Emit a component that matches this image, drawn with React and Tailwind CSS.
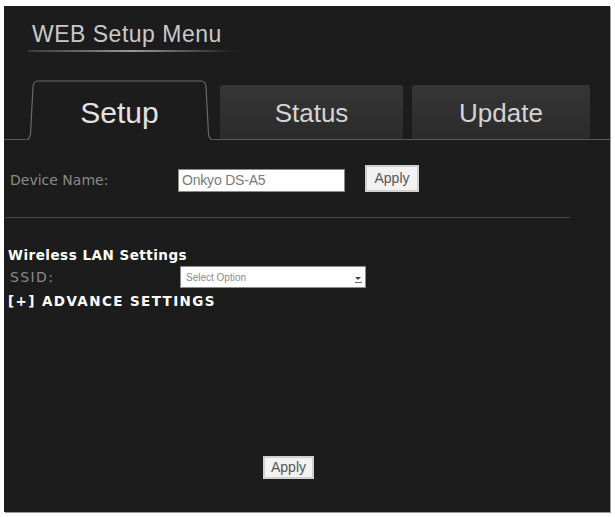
export default function App() {
  return (
    <div className="w-[615px] h-[517px] bg-white pt-[6px] pl-[4px]">
      <div className="relative w-[606px] h-[506px] bg-[#1c1c1c] shadow-[1px_1px_0_#9a9a9a]">

        {/* Title */}
        <div className="pl-[28px] pt-[15px] h-[44px]">
          <span
            className="text-[23px] leading-[26px] text-[#c9c9c9] tracking-[0.5px]"
            style={{ fontFamily: '"Liberation Sans", Arial, sans-serif' }}
          >
            WEB Setup Menu
          </span>
        </div>
        <div className="ml-[24px] w-[208px] h-[2px] bg-gradient-to-r from-[#3a3a3a] via-[#9a9a9a] to-transparent" />

        {/* Tabs */}
        <div
          className="mt-[28px] h-[60px] flex items-end border-b border-[#5a5a5a]"
          style={{ fontFamily: '"Liberation Sans", Arial, sans-serif' }}
        >
          <div className="relative ml-[23px] w-[185px] h-[60px] -mb-px bg-[#1c1c1c] flex items-center justify-center">
            <svg className="absolute inset-0" width="185" height="60" viewBox="0 0 185 60">
              <path d="M0.5 60 Q3 58 3.5 54 L6 7 Q6.5 1 11 1 L174 1 Q178.5 1 179 7 L181.5 54 Q182 58 184.5 60" fill="none" stroke="#6a6a6a" strokeWidth="1.2" />
            </svg>
            <span className="relative text-[30px] text-[#e2e2e2] pt-[4px]">Setup</span>
          </div>
          <div className="ml-[8px] w-[183px] h-[54px] rounded-t-[3px] bg-gradient-to-b from-[#363636] to-[#2b2b2b] flex items-center justify-center">
            <span className="text-[26px] text-[#d4d4d4] pt-[2px]">Status</span>
          </div>
          <div className="ml-[9px] w-[178px] h-[54px] rounded-t-[3px] bg-gradient-to-b from-[#363636] to-[#2b2b2b] flex items-center justify-center">
            <span className="text-[26px] text-[#d4d4d4] pt-[2px]">Update</span>
          </div>
        </div>

        {/* Device name */}
        <div className="mt-[25px] h-[27px] flex items-end" style={{ fontFamily: '"DejaVu Sans", Verdana, sans-serif' }}>
          <span className="ml-[6px] w-[168px] text-[14px] leading-[20px] pb-[2px] text-[#8a8a8a]">Device Name:</span>
          <div
            className="w-[167px] h-[23px] bg-white border border-[#8a8a8a] flex items-center pl-[3px] text-[14px] text-[#7a7a7a] tracking-[-0.2px]"
            style={{ fontFamily: '"Liberation Sans", Arial, sans-serif' }}
          >
            Onkyo DS-A5
          </div>
          <button
            className="ml-[20px] w-[54px] h-[27px] bg-[#f2f2f2] border-2 border-[#d0d0d0] text-[14px] text-[#555] flex items-center justify-center"
            style={{ fontFamily: '"Liberation Sans", Arial, sans-serif' }}
          >
            Apply
          </button>
        </div>

        {/* Divider */}
        <div className="mt-[25px] ml-[1px] w-[565px] h-px bg-[#474747]" />

        {/* Wireless LAN */}
        <div style={{ fontFamily: '"DejaVu Sans", Verdana, sans-serif' }}>
          <div className="mt-[28px] ml-[4px] h-[18px] leading-[18px] text-[13.5px] font-bold text-white tracking-[0.5px]">
            Wireless LAN Settings
          </div>
          <div className="mt-[2px] h-[22px] flex items-center">
            <span className="ml-[6px] w-[170px] text-[14px] text-[#8a8a8a] tracking-[1.4px]">SSID:</span>
            <div className="w-[186px] h-[22px] bg-white border border-[#8a8a8a] flex items-center justify-between pl-[5px] pr-[3px]">
              <span className="text-[10px] text-[#8a8a8a]" style={{ fontFamily: '"Liberation Sans", Arial, sans-serif' }}>Select Option</span>
              <span className="w-[8px] h-[12px] flex flex-col items-center justify-end">
                <span className="block w-0 h-0 border-l-[3px] border-r-[3px] border-t-[3px] border-l-transparent border-r-transparent border-t-[#444]" />
                <span className="block mt-[2px] w-[7px] h-px bg-[#666]" />
              </span>
            </div>
          </div>
          <div className="mt-[4px] ml-[4px] h-[18px] leading-[18px] text-[13.5px] font-bold text-white tracking-[1.4px]">
            [+] ADVANCE SETTINGS
          </div>
        </div>

        {/* Bottom apply */}
        <div className="mt-[146px] pl-[259px]">
          <button
            className="w-[51px] h-[23px] bg-[#f2f2f2] border-2 border-[#d0d0d0] text-[14px] text-[#555] flex items-center justify-center"
            style={{ fontFamily: '"Liberation Sans", Arial, sans-serif' }}
          >
            Apply
          </button>
        </div>
      </div>
    </div>
  );
}
